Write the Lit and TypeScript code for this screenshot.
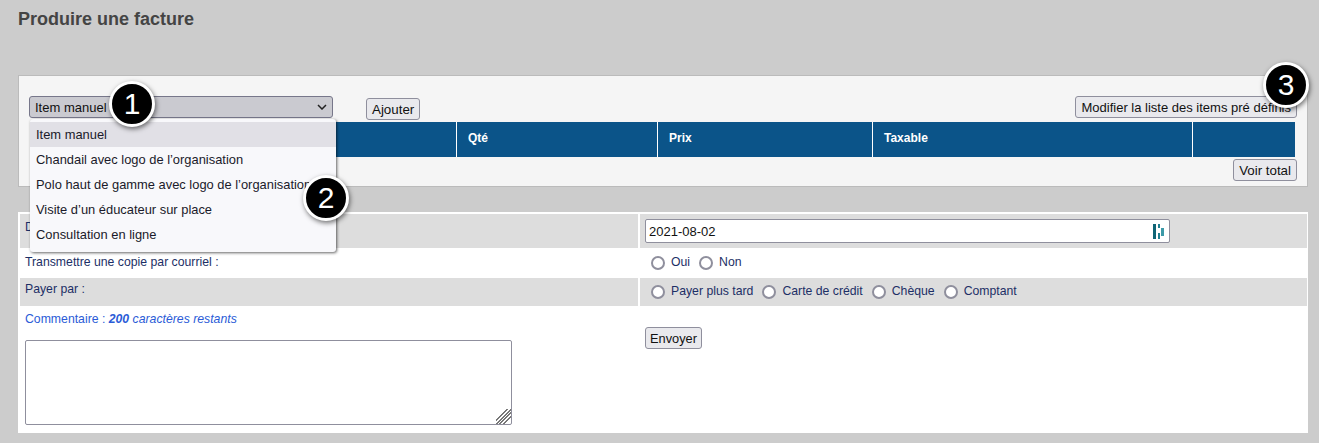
import { LitElement, html, css } from 'lit';
import { customElement } from 'lit/decorators.js';

const ITEMS = [
  'Item manuel',
  'Chandail avec logo de l’organisation',
  'Polo haut de gamme avec logo de l’organisation',
  'Visite d’un éducateur sur place',
  'Consultation en ligne',
];

@customElement('app-root')
export class AppRoot extends LitElement {
  static styles = css`
    :host {
      display: block;
      position: relative;
      height: 443px;
      overflow: hidden;
      background: #cccccc;
      font-family: 'Liberation Sans', Arial, sans-serif;
      font-size: 12.25px;
      color: #1c2f66;
    }

    h1 {
      margin: 0;
      padding: 10px 0 0 18px;
      height: 75px;
      box-sizing: border-box;
      font-size: 18px;
      line-height: 18px;
      color: #444444;
    }

    /* top panel */
    .panel {
      margin: 0 11px 0 18px;
      height: 112px;
      box-sizing: border-box;
      padding: 20px 10px 0 10px;
      background: #f5f5f5;
      border: 1px solid #bbbbbb;
    }

    .toolbar {
      display: flex;
      align-items: flex-start;
      height: 26px;
    }

    .select {
      display: flex;
      align-items: center;
      justify-content: space-between;
      box-sizing: border-box;
      width: 304px;
      height: 22px;
      padding: 0 5px;
      border: 1px solid #77778a;
      border-radius: 3px;
      background: #cacad0;
      font-size: 13px;
      color: #111;
    }

    button {
      box-sizing: border-box;
      height: 22px;
      padding: 0 5px;
      border: 1px solid #8f8f9d;
      border-radius: 3px;
      background: #e9e9ed;
      font-family: inherit;
      font-size: 13.33px;
      color: #111;
    }

    .add {
      margin: 2px 0 0 33px;
    }

    .edit {
      margin-left: auto;
      font-size: 13px;
    }

    .thead {
      display: grid;
      grid-template-columns: 426px 201px 215px 320px 103px;
      margin-left: 1px;
      width: 1265px;
      height: 35px;
      background: #0b5489;
      color: #fff;
      font-size: 12px;
      font-weight: bold;
    }

    .thead div {
      box-sizing: border-box;
      padding-left: 11px;
      line-height: 33px;
      border-left: 1px solid #fff;
    }

    .thead div:first-child {
      border-left: 0;
    }

    .totals {
      display: flex;
      justify-content: flex-end;
      margin-top: 2px;
    }

    /* form table */
    .form {
      margin: 25px 11px 0 18px;
      height: 221px;
      box-sizing: border-box;
      padding: 2px 1px 0 2px;
      background: #fff;
      display: grid;
      grid-template-columns: 618px 1fr;
      grid-template-rows: 34px 30px 28px 1fr;
      column-gap: 2px;
    }

    .cell {
      padding: 0 5px;
    }

    .grey {
      background: #dddddd;
    }

    .label {
      padding-top: 6px;
      line-height: 14px;
      box-sizing: border-box;
    }

    .label.tall {
      padding-top: 7px;
    }

    .label.short {
      padding-top: 4px;
    }

    .date {
      display: flex;
      align-items: center;
      justify-content: space-between;
      box-sizing: border-box;
      width: 525px;
      height: 24px;
      margin-top: 5px;
      padding: 0 4px 0 3px;
      background: #fff;
      border: 1px solid #8f8f9d;
      border-radius: 2px;
      font-size: 13px;
      color: #111;
    }

    .radios {
      display: flex;
      align-items: center;
      box-sizing: border-box;
      padding: 0 0 2px 6px;
      height: 100%;
      gap: 9px;
    }

    .radios label {
      display: flex;
      align-items: center;
      gap: 6px;
    }

    input[type='radio'] {
      appearance: none;
      box-sizing: border-box;
      width: 14px;
      height: 14px;
      margin: 2px 0 0 0;
      background: #fff;
      border: 2px solid #8f8f9d;
      border-radius: 50%;
    }

    .comment {
      color: #2a5bd7;
      padding-top: 6px;
      line-height: 14px;
    }

    textarea {
      display: block;
      box-sizing: border-box;
      width: 487px;
      height: 85px;
      margin-top: 14px;
      border: 1px solid #8f8f9d;
      border-radius: 2px;
      background: #fff;
    }

    textarea::-webkit-resizer {
      background: linear-gradient(
        135deg,
        transparent 36%,
        #777 36%, #777 42%,
        transparent 42%, transparent 48%,
        #777 48%, #777 54%,
        transparent 54%, transparent 60%,
        #777 60%, #777 66%,
        transparent 66%, transparent 72%,
        #777 72%, #777 78%,
        transparent 78%
      );
    }

    .send {
      margin: 21px 0 0 0;
      padding: 0 4px;
      font-size: 12.8px;
    }

    /* open dropdown */
    .menu {
      position: absolute;
      left: 30px;
      top: 119px;
      width: 306px;
      height: 133px;
      box-sizing: border-box;
      padding-top: 3px;
      background: #f8f8fb;
      border-radius: 3px;
      box-shadow: 1px 1px 3px rgba(0, 0, 0, 0.6);
      font-size: 12.9px;
      color: #1a1a2a;
    }

    .menu div {
      height: 25px;
      line-height: 25px;
      padding-left: 6px;
      white-space: nowrap;
    }

    .menu .on {
      background: #e1e0e6;
    }

    /* numbered callouts */
    .badge {
      position: absolute;
      box-sizing: border-box;
      width: 46px;
      height: 46px;
      border: 3px solid #fff;
      border-radius: 50%;
      background: #000;
      box-shadow: 1px 2px 5px rgba(0, 0, 0, 0.55);
      color: #fff;
      font-size: 30px;
      line-height: 40px;
      text-align: center;
    }
  `;

  render() {
    return html`
      <h1>Produire une facture</h1>
      <div class="panel">
        <div class="toolbar">
          <div class="select">
            <span>Item manuel</span>
            <svg width="10" height="6" viewBox="0 0 10 6">
              <path d="M1 1l4 4 4-4" fill="none" stroke="#222" stroke-width="1.5" />
            </svg>
          </div>
          <button class="add">Ajouter</button>
          <button class="edit">Modifier la liste des items pré définis</button>
        </div>
        <div class="thead">
          <div>Item</div>
          <div>Qté</div>
          <div>Prix</div>
          <div>Taxable</div>
          <div></div>
        </div>
        <div class="totals"><button>Voir total</button></div>
      </div>

      <div class="form">
        <div class="cell grey label">Date :</div>
        <div class="cell grey">
          <div class="date">
            <span>2021-08-02</span>
            <svg width="12" height="16" viewBox="0 0 12 16">
              <path d="M0 1h3v15H0z" fill="#0f6475" />
              <path d="M5 1h2v4H5zM5 10h2v6H5z" fill="#1f7f8f" />
              <path d="M8 5h3v8H8z" fill="#3d9aa8" />
            </svg>
          </div>
        </div>

        <div class="cell label tall">Transmettre une copie par courriel :</div>
        <div class="cell">
          <div class="radios">
            <label><input type="radio" name="copy" />Oui</label>
            <label><input type="radio" name="copy" />Non</label>
          </div>
        </div>

        <div class="cell grey label short">Payer par :</div>
        <div class="cell grey">
          <div class="radios">
            <label><input type="radio" name="pay" />Payer plus tard</label>
            <label><input type="radio" name="pay" />Carte de crédit</label>
            <label><input type="radio" name="pay" />Chèque</label>
            <label><input type="radio" name="pay" />Comptant</label>
          </div>
        </div>

        <div class="cell comment">
          Commentaire : <i><b>200</b> caractères restants</i>
          <textarea></textarea>
        </div>
        <div class="cell"><button class="send">Envoyer</button></div>
      </div>

      <div class="menu">
        ${ITEMS.map((item, i) => html`<div class=${i === 0 ? 'on' : ''}>${item}</div>`)}
      </div>

      <div class="badge" style="left: 109px; top: 81px">1</div>
      <div class="badge" style="left: 303px; top: 175px">2</div>
      <div class="badge" style="left: 1263px; top: 62px">3</div>
    `;
  }
}
